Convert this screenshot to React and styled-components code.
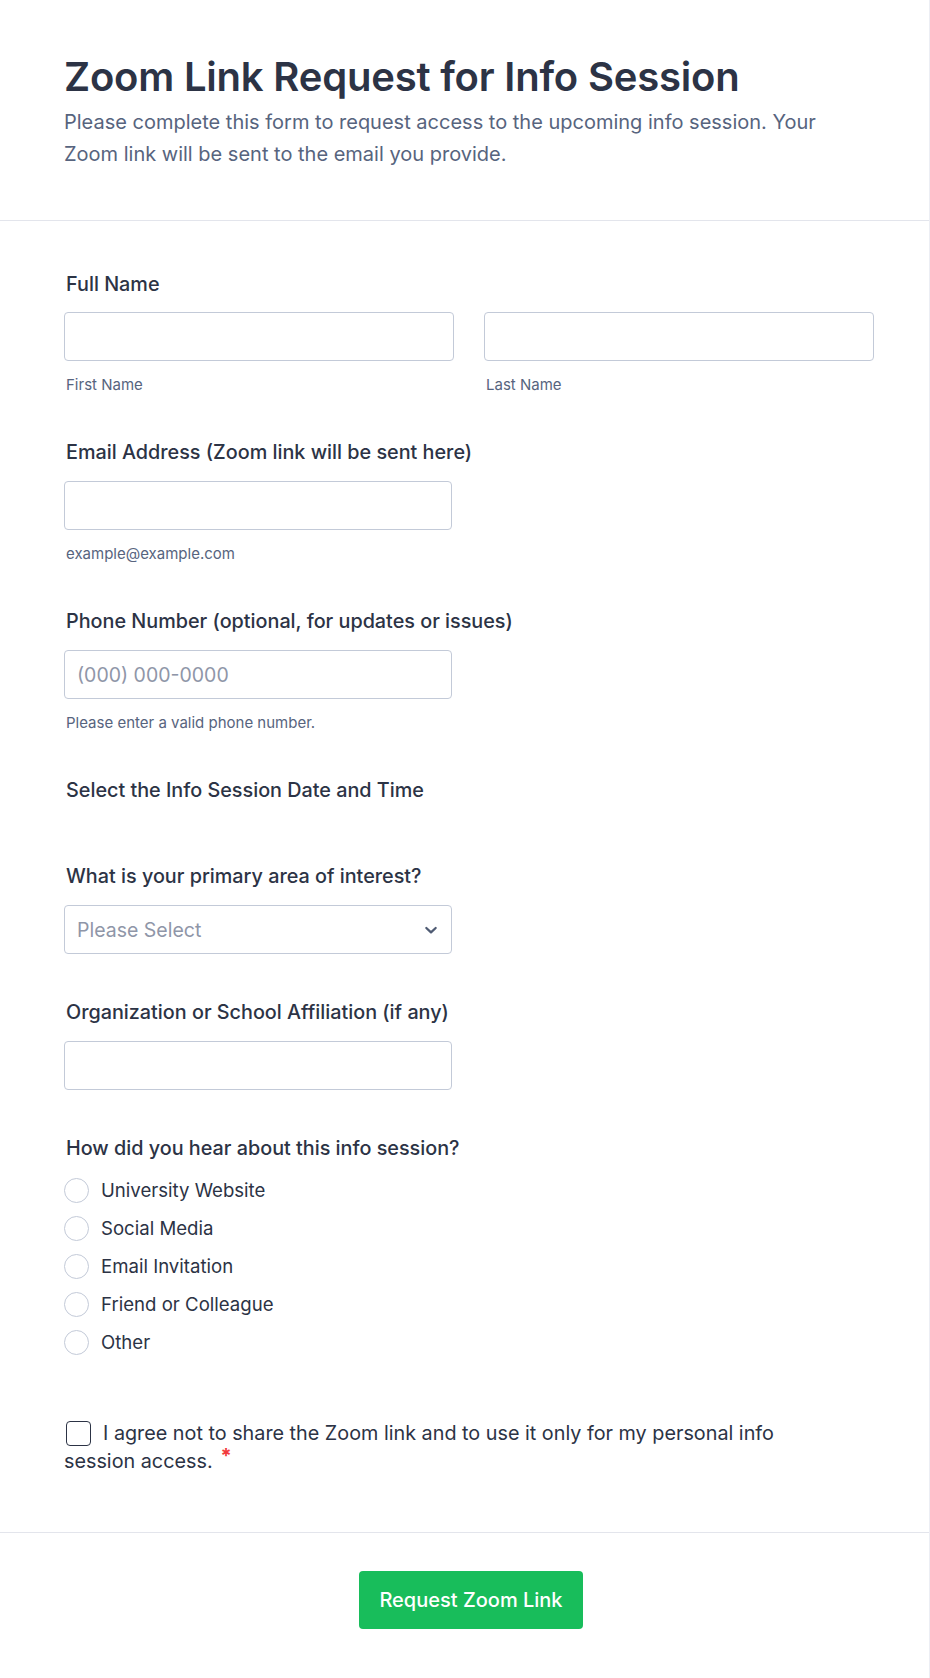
import React from 'react';
import styled, { createGlobalStyle } from 'styled-components';

const GlobalStyle = createGlobalStyle`
  * { box-sizing: border-box; }
  body {
    margin: 0;
    background: #fff;
    font-family: Inter, "Noto Sans", sans-serif;
    color: #2c3345;
  }
`;

const Page = styled.div`
  width: 930px;
  min-height: 1678px;
  background: #fff;
  border-right: 1px solid #eceef4;
`;

const Header = styled.header`
  padding: 48px 64px 50px;
  border-bottom: 1px solid #e3e5ec;
`;

const Title = styled.h1`
  margin: 0;
  font-size: 40px;
  line-height: 58px;
  font-weight: 600;
  color: #2c3345;
  letter-spacing: -0.2px;
`;

const Description = styled.p`
  margin: 0;
  max-width: 790px;
  font-size: 20px;
  line-height: 32px;
  color: #57647e;
`;

const Body = styled.main`
  padding: 51px 55px 57px 64px;
  display: flex;
  flex-direction: column;
`;

const Field = styled.div`
  display: flex;
  flex-direction: column;
  margin-bottom: ${(p) => p.$after ?? 46}px;
`;

const Label = styled.label`
  font-size: 19.8px;
  line-height: 24px;
  font-weight: 500;
  color: #2c3345;
  padding-left: 2px;
`;

const Row = styled.div`
  display: grid;
  grid-template-columns: 1fr 1fr;
  column-gap: 30px;
  margin-top: 16px;
`;

const Col = styled.div`
  display: flex;
  flex-direction: column;
`;

const Input = styled.input`
  display: block;
  width: ${(p) => (p.$full ? '100%' : '388px')};
  height: 49px;
  margin-top: ${(p) => (p.$full ? 0 : 17)}px;
  padding: 0 12px;
  border: 1px solid #c3cad8;
  border-radius: 4px;
  background: #fff;
  font-family: inherit;
  font-size: 19.5px;
  color: #2c3345;
  outline: none;
  &::placeholder { color: #8f96a8; }
`;

const SubLabel = styled.span`
  margin-top: 15px;
  padding-left: 2px;
  font-size: 15px;
  line-height: 18px;
  color: #57647e;
`;

const SelectBox = styled.div`
  width: 388px;
  height: 49px;
  margin-top: 17px;
  padding: 0 12px;
  display: flex;
  align-items: center;
  justify-content: space-between;
  border: 1px solid #c3cad8;
  border-radius: 4px;
  font-size: 19.5px;
  color: #8f96a8;
`;

const Options = styled.div`
  display: flex;
  flex-direction: column;
  gap: 12px;
  margin-top: 17px;
`;

const Option = styled.label`
  display: flex;
  align-items: center;
  gap: 12px;
  height: 26px;
  font-size: 18.6px;
  color: #2c3345;
`;

const Radio = styled.span`
  width: 25px;
  height: 25px;
  border-radius: 50%;
  border: 1px solid #c3cad8;
  background: #fff;
  flex: none;
`;

const Consent = styled.div`
  margin-top: 64px;
  max-width: 770px;
  font-size: 19.8px;
  line-height: 28px;
  color: #2c3345;
`;

const Checkbox = styled.span`
  display: inline-block;
  width: 25px;
  height: 25px;
  margin: 0 12px 0 2px;
  vertical-align: -6px;
  border: 1.5px solid #2c3345;
  border-radius: 4px;
  background: #fff;
`;

const Required = styled.span`
  color: #f23a3c;
  margin-left: 8px;
  font-weight: 700;
  font-size: 20px;
  vertical-align: 5px;
  line-height: 0;
`;

const Footer = styled.footer`
  border-top: 1px solid #e3e5ec;
  padding: 38px 51px 50px 64px;
  display: flex;
  justify-content: center;
`;

const SubmitButton = styled.button`
  height: 58px;
  padding: 0 20px;
  border: none;
  border-radius: 4px;
  background: #18bd5b;
  color: #fff;
  font-family: inherit;
  font-size: 20px;
  font-weight: 500;
  cursor: pointer;
`;

const Chevron = () => (
  <svg width="16" height="16" viewBox="0 0 24 24" fill="none" stroke="#4f5b73" strokeWidth="3.4" strokeLinecap="round" strokeLinejoin="round">
    <polyline points="5 9 12 15.5 19 9" />
  </svg>
);

const sources = ['University Website', 'Social Media', 'Email Invitation', 'Friend or Colleague', 'Other'];

export default function App() {
  return (
    <Page>
      <GlobalStyle />
      <Header>
        <Title>Zoom Link Request for Info Session</Title>
        <Description>
          Please complete this form to request access to the upcoming info session. Your Zoom link will be sent to the email you provide.
        </Description>
      </Header>

      <Body>
        <Field>
          <Label>Full Name</Label>
          <Row>
            <Col>
              <Input $full />
              <SubLabel>First Name</SubLabel>
            </Col>
            <Col>
              <Input $full />
              <SubLabel>Last Name</SubLabel>
            </Col>
          </Row>
        </Field>

        <Field>
          <Label>Email Address (Zoom link will be sent here)</Label>
          <Input />
          <SubLabel>example@example.com</SubLabel>
        </Field>

        <Field>
          <Label>Phone Number (optional, for updates or issues)</Label>
          <Input placeholder="(000) 000-0000" />
          <SubLabel>Please enter a valid phone number.</SubLabel>
        </Field>

        <Field $after={62}>
          <Label>Select the Info Session Date and Time</Label>
        </Field>

        <Field>
          <Label>What is your primary area of interest?</Label>
          <SelectBox>
            Please Select
            <Chevron />
          </SelectBox>
        </Field>

        <Field>
          <Label>Organization or School Affiliation (if any)</Label>
          <Input />
        </Field>

        <Field $after={0}>
          <Label>How did you hear about this info session?</Label>
          <Options>
            {sources.map((item) => (
              <Option key={item}>
                <Radio />
                {item}
              </Option>
            ))}
          </Options>
        </Field>

        <Consent>
          <Checkbox />
          I agree not to share the Zoom link and to use it only for my personal info session access.
          <Required>*</Required>
        </Consent>
      </Body>

      <Footer>
        <SubmitButton>Request Zoom Link</SubmitButton>
      </Footer>
    </Page>
  );
}
